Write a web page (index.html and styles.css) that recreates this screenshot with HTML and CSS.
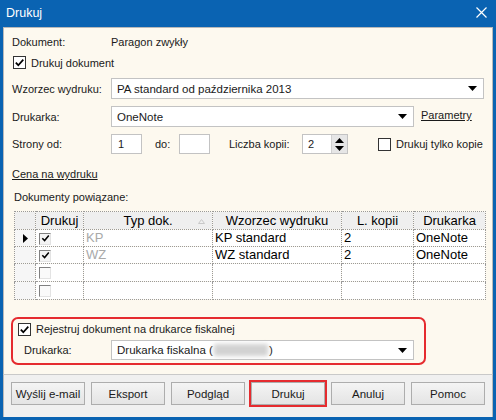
FILE: index.html
```html
<!DOCTYPE html>
<html lang="pl">
<head>
<meta charset="utf-8">
<title>Drukuj</title>
<link rel="stylesheet" href="styles.css">
</head>
<body>
<div class="window">
  <div class="titlebar">
    <span class="title">Drukuj</span>
    <svg class="close" width="11" height="11" viewBox="0 0 11 11"><path d="M0.5 0.5 L10.5 10.5 M10.5 0.5 L0.5 10.5" stroke="#fff" stroke-width="1.2" fill="none"/></svg>
  </div>
  <div class="content">
    <div class="row r1"><span class="label">Dokument:</span><span>Paragon zwykły</span></div>
    <div class="row r2">
      <span class="cb"><svg width="11" height="11" viewBox="0 0 11 11"><path d="M1.8 5.6 L4.3 8.2 L9.3 2.6" stroke="#000" stroke-width="1.7" fill="none"/></svg></span>
      <span class="cbtext">Drukuj dokument</span>
    </div>
    <div class="row r3"><span class="label">Wzorzec wydruku:</span>
      <div class="combo c-wide"><span class="ctext">PA standard od października 2013</span><svg class="arrow" width="9" height="5" viewBox="0 0 9 5"><path d="M0 0 H9 L4.5 5 Z" fill="#000"/></svg></div>
    </div>
    <div class="row r4"><span class="label">Drukarka:</span>
      <div class="combo c-mid"><span class="ctext">OneNote</span><svg class="arrow" width="9" height="5" viewBox="0 0 9 5"><path d="M0 0 H9 L4.5 5 Z" fill="#000"/></svg></div>
      <span class="link params">Parametry</span>
    </div>
    <div class="row r5"><span class="label">Strony od:</span>
      <div class="field f-small">1</div>
      <span class="do">do:</span>
      <div class="field f-small"></div>
      <span class="kopii">Liczba kopii:</span>
      <div class="spinner">
        <div class="spin-val">2</div>
        <div class="spin-btns">
          <svg width="9" height="5" viewBox="0 0 9 5"><path d="M0 5 H9 L4.5 0 Z" fill="#000"/></svg>
          <svg width="9" height="5" viewBox="0 0 9 5"><path d="M0 0 H9 L4.5 5 Z" fill="#000"/></svg>
        </div>
      </div>
      <span class="cb cb-empty"></span>
      <span class="cbtext">Drukuj tylko kopie</span>
    </div>
    <div class="row r6"><span class="link">Cena na wydruku</span></div>
    <div class="row r7">Dokumenty powiązane:</div>
    <table class="grid">
      <colgroup><col class="w-rh"><col class="w-dr"><col class="w-typ"><col class="w-wz"><col class="w-lk"><col class="w-pr"></colgroup>
      <thead>
        <tr><th></th><th>Drukuj</th><th class="sorted">Typ dok.<svg class="sort" width="7" height="5" viewBox="0 0 7 5"><path d="M0.5 4.5 L3.5 0.5 L6.5 4.5 Z" fill="none" stroke="#c8c8c8" stroke-width="1"/></svg></th><th>Wzorzec wydruku</th><th>L. kopii</th><th>Drukarka</th></tr>
      </thead>
      <tbody>
        <tr class="h17"><td class="rh"><svg width="5" height="9" viewBox="0 0 5 9"><path d="M0 0 L5 4.5 L0 9 Z" fill="#000"/></svg></td><td><span class="gcb"><svg width="9" height="9" viewBox="0 0 9 9"><path d="M1.3 4.2 L3.6 6.6 L7.8 1.6" stroke="#000" stroke-width="1.5" fill="none"/></svg></span></td><td class="dim">KP</td><td>KP standard</td><td>2</td><td>OneNote</td></tr>
        <tr class="h17"><td class="rh"></td><td><span class="gcb"><svg width="9" height="9" viewBox="0 0 9 9"><path d="M1.3 4.2 L3.6 6.6 L7.8 1.6" stroke="#000" stroke-width="1.5" fill="none"/></svg></span></td><td class="dim">WZ</td><td>WZ standard</td><td>2</td><td>OneNote</td></tr>
        <tr class="h18"><td class="rh"></td><td><span class="gcb gcb-off"></span></td><td></td><td></td><td></td><td></td></tr>
        <tr class="h18"><td class="rh"></td><td><span class="gcb gcb-off"></span></td><td></td><td></td><td></td><td></td></tr>
      </tbody>
    </table>
    <div class="fiscal">
      <div class="frow1">
        <span class="cb"><svg width="11" height="11" viewBox="0 0 11 11"><path d="M1.8 5.6 L4.3 8.2 L9.3 2.6" stroke="#000" stroke-width="1.7" fill="none"/></svg></span>
        <span class="cbtext">Rejestruj dokument na drukarce fiskalnej</span>
      </div>
      <div class="frow2">
        <span class="flabel">Drukarka:</span>
        <div class="combo c-fis"><span class="ctext">Drukarka fiskalna (<span class="blur"></span>)</span><svg class="arrow" width="9" height="5" viewBox="0 0 9 5"><path d="M0 0 H9 L4.5 5 Z" fill="#000"/></svg></div>
      </div>
    </div>
  </div>
  <div class="footer">
    <button class="btn">Wyślij e-mail</button>
    <button class="btn">Eksport</button>
    <button class="btn">Podgląd</button>
    <button class="btn btn-red">Drukuj</button>
    <button class="btn">Anuluj</button>
    <button class="btn">Pomoc</button>
  </div>
</div>
</body>
</html>
```

FILE: styles.css
```css
html, body {
  margin: 0;
  padding: 0;
}
body {
  font-family: "Liberation Sans", Arial, sans-serif;
  font-size: 11px;
  color: #1a1a1a;
}
.window {
  width: 496px;
  height: 420px;
  box-sizing: border-box;
  background: #0a63b2;
  padding: 0 3px 3px 3px;
  display: flex;
  flex-direction: column;
}
.titlebar {
  height: 27px;
  flex: 0 0 27px;
  display: flex;
  align-items: center;
  justify-content: space-between;
  padding: 0 6px 2px 3px;
  box-sizing: border-box;
}
.title {
  color: #fff;
  font-size: 12.5px;
}
.close {
  display: block;
}
.content {
  flex: 1 1 auto;
  background: #fdf9ef;
  border: 1px solid #b9b9b9;
  border-bottom: 1px solid #c9c9c9;
  padding: 5px 8px 0 8px;
  overflow: hidden;
}
.row {
  display: flex;
  align-items: center;
}
.label {
  width: 99px;
  flex: 0 0 99px;
}
.r1 { height: 18px; }
.r2 { height: 19px; margin-top: 2px; padding-left: 1px; }
.r3 { height: 21px; margin-top: 6px; }
.r4 { height: 21px; margin-top: 7px; }
.r5 { height: 20px; margin-top: 7px; }
.r6 { height: 16px; margin-top: 12px; }
.r7 { height: 16px; margin-top: 7px; padding-left: 2px; }

.cb {
  width: 11px;
  height: 11px;
  border: 1px solid #333;
  background: #fff;
  display: inline-flex;
  align-items: center;
  justify-content: center;
  flex: 0 0 auto;
}
.cb svg { display: block; }
.cbtext { margin-left: 5px; }

.combo {
  height: 100%;
  box-sizing: border-box;
  border: 1px solid #c3c3c3;
  background: #fff;
  display: flex;
  align-items: center;
  justify-content: space-between;
  padding: 0 6px 0 5px;
}
.c-wide { width: 375px; }
.c-mid { width: 303px; }
.ctext { font-size: 11.5px; white-space: nowrap; }
.arrow { display: block; }
.params { margin-left: 7px; margin-top: -3px; }
.link {
  text-decoration: underline;
  color: #1a1a1a;
}

.field {
  height: 100%;
  box-sizing: border-box;
  border: 1px solid #c3c3c3;
  background: #fff;
  display: flex;
  align-items: center;
  padding-left: 6px;
}
.f-small { width: 31px; }
.do { margin-left: 13px; width: 24px; }
.kopii { margin-left: 19px; width: 73px; }
.spinner {
  width: 46px;
  height: 100%;
  box-sizing: border-box;
  border: 1px solid #c3c3c3;
  background: #fff;
  display: flex;
}
.spin-val {
  flex: 1;
  display: flex;
  align-items: center;
  padding-left: 5px;
}
.spin-btns {
  width: 15px;
  background: #e6e6e6;
  border-left: 1px solid #d0d0d0;
  display: flex;
  flex-direction: column;
  align-items: center;
  justify-content: space-around;
  padding: 1px 0;
}
.spin-btns svg { display: block; }
.cb-empty { margin-left: 30px; }

.grid {
  margin-top: 6px;
  margin-left: 2px;
  border-collapse: collapse;
  table-layout: fixed;
  width: 471px;
  font-size: 13px;
  color: #000;
}
.w-rh { width: 21px; }
.w-dr { width: 48px; }
.w-typ { width: 129px; }
.w-wz { width: 129px; }
.w-lk { width: 72px; }
.w-pr { width: 72px; }
.grid th, .grid td {
  border: 1px dotted #9a9a9a;
  padding: 0 2px;
  white-space: nowrap;
  overflow: hidden;
  line-height: 14px;
}
.grid th {
  height: 17px;
  background: #efefef;
  font-weight: normal;
  text-align: center;
}
.grid td {
  background: #fff;
  text-align: left;
}
.grid td.rh {
  background: #f6f6f6;
  text-align: center;
  padding: 0;
}
.grid td.rh svg { display: inline-block; vertical-align: middle; }
.h17 td { height: 16px; }
.h18 td { height: 17px; }
.sorted { position: relative; }
.sort {
  position: absolute;
  right: 7px;
  top: 7px;
}
.dim { color: #a9a9a9; }
.gcb {
  display: inline-flex;
  align-items: center;
  justify-content: center;
  width: 10px;
  height: 10px;
  border: 1px solid;
  border-color: #808080 #e3e3e3 #e3e3e3 #808080;
  background: #f4f4f4;
  vertical-align: middle;
  margin-left: 1px;
}
.gcb svg { display: block; }
.gcb-off { background: #fafafa; }

.fiscal {
  margin-top: 17px;
  margin-left: -1px;
  width: 415px;
  height: 48px;
  box-sizing: border-box;
  border: 2px solid #e52b2f;
  border-radius: 7px;
  padding: 1px 10px 0 5px;
}
.frow1 {
  height: 18px;
  display: flex;
  align-items: center;
}
.frow2 {
  height: 20px;
  margin-top: 2px;
  display: flex;
  align-items: center;
}
.flabel {
  margin-left: 6px;
  width: 87px;
  flex: 0 0 87px;
}
.c-fis { width: 303px; }
.blur {
  display: inline-block;
  width: 54px;
  height: 12px;
  background: #d2d2d2;
  filter: blur(2px);
  vertical-align: middle;
  margin: 0 1px;
}

.footer {
  flex: 0 0 42px;
  height: 42px;
  box-sizing: border-box;
  background: #f0f0f0;
  border-left: 1px solid #b9b9b9;
  border-right: 1px solid #b9b9b9;
  padding: 7px 0 0 7px;
  display: flex;
  align-items: flex-start;
  gap: 6px;
}
.btn {
  width: 74px;
  height: 23px;
  box-sizing: border-box;
  border: 1px solid #adadad;
  background: linear-gradient(#f4f4f4, #e4e4e4);
  font-family: "Liberation Sans", Arial, sans-serif;
  font-size: 11.5px;
  color: #1a1a1a;
  padding: 0;
  margin: 0;
}
.btn-red {
  outline: 2px solid #e52b2f;
  outline-offset: 0;
}
```
